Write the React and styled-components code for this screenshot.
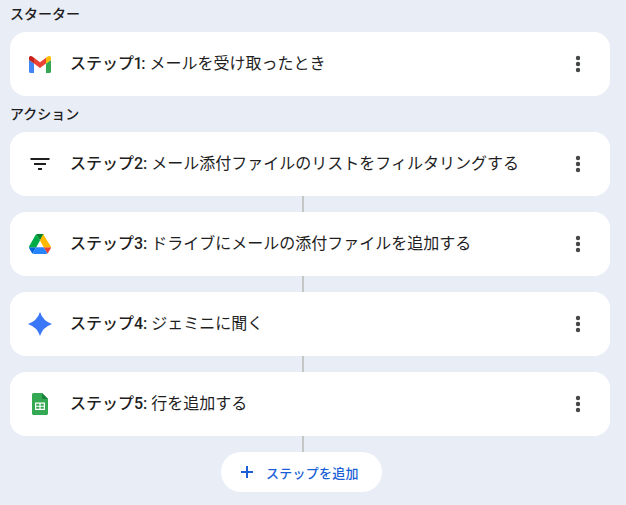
import { Fragment } from 'react';
import styled, { createGlobalStyle } from 'styled-components';

const GlobalStyle = createGlobalStyle`
  html, body {
    margin: 0;
    padding: 0;
    background: #e9edf6;
    font-family: Roboto, "Noto Sans CJK JP", sans-serif;
    color: #1f1f1f;
  }
`;

const Page = styled.div`
  width: 600px;
  height: 505px;
  overflow: hidden;
  padding: 0 16px 0 10px;
  display: flex;
  flex-direction: column;
`;

const SectionLabel = styled.div`
  height: ${(p) => (p.$tight ? '36px' : '32px')};
  line-height: ${(p) => (p.$tight ? '36px' : '29px')};
  font-size: 14px;
  font-weight: 500;
`;

const Card = styled.div`
  height: 64px;
  flex: none;
  box-sizing: border-box;
  background: #fff;
  border-radius: 16px;
  display: flex;
  align-items: center;
  padding: 0 20px 0 18px;
`;

const IconSlot = styled.div`
  width: 24px;
  height: 24px;
  margin-right: 18px;
  display: flex;
  align-items: center;
  justify-content: center;
`;

const Title = styled.div`
  flex: 1;
  font-size: 16px;
  line-height: 24px;
  white-space: nowrap;
`;

const StepNo = styled.span`
  font-weight: 500;
  font-variant-numeric: proportional-nums;
`;

const MenuButton = styled.div`
  width: 24px;
  height: 24px;
  display: flex;
  align-items: center;
  justify-content: center;
`;

const Connector = styled.div`
  width: 2px;
  height: 16px;
  flex: none;
  background: #c4c7c5;
  margin-left: 292px;
`;

const AddButton = styled.div`
  flex: none;
  width: 161px;
  height: 40px;
  box-sizing: border-box;
  margin-left: 211px;
  padding-left: 19px;
  background: #fff;
  border-radius: 20px;
  display: flex;
  align-items: center;
  gap: 12px;
  color: #1a5fd6;
  font-size: 13px;
  font-weight: 500;
  letter-spacing: 0.25px;
`;

const GmailIcon = () => (
  <svg width="24" height="24" viewBox="0 0 24 24">
    <path fill="#4285f4" d="M1 8v11.500C1 20.300 1.700 21 2.500 21H6V11.500z" />
    <path fill="#34a853" d="M18 11.500V21h3.500c.8 0 1.500-.7 1.500-1.500V8z" />
    <path fill="#ea4335" d="M6 11.500 12 16l6-4.500V5.800l-6 4.500-6-4.500z" />
    <path fill="#c5221f" d="M1 5.800V8l5 3.500V5.800L4.600 4.700C3.100 3.600 1 4 1 5.800z" />
    <path fill="#fbbc04" d="M18 5.800v5.700L23 8V5.800c0-1.800-2.100-2.200-3.600-1.100z" />
  </svg>
);

const FilterIcon = () => (
  <svg width="24" height="24" viewBox="0 0 24 24" fill="#1f1f1f">
    <path d="M2.500 6h19v2h-19zM6 11h12v2H6zM10 16h4v2h-4z" />
  </svg>
);

const DriveIcon = () => (
  <svg width="24" height="24" viewBox="0 0 24 24">
    <path fill="#0066da" d="M2.800 18.900 3.800 20.700c.2.400.5.700.9.900L8.300 15.300H1c0 .4.100.8.300 1.200z" />
    <path fill="#00ac47" d="M12 8.600 8.300 2.300c-.4.200-.7.500-.9.900L1.300 14.100c-.2.400-.3.800-.3 1.200h7.300z" />
    <path fill="#ea4335" d="M19.300 21.600c.4-.2.700-.5.900-.9l.4-.7 2.100-3.500c.2-.4.300-.8.300-1.200h-7.300l1.600 3z" />
    <path fill="#00832d" d="M12 8.600l3.700-6.300c-.4-.2-.8-.3-1.200-.3H9.500c-.4 0-.8.100-1.200.3z" />
    <path fill="#2684fc" d="M15.700 15.300H8.300l-3.600 6.300c.4.200.8.300 1.200.3h12.200c.4 0 .8-.1 1.200-.3z" />
    <path fill="#ffba00" d="M19.300 9 15.900 3.200c-.2-.4-.5-.7-.9-.9L12 8.600l3.700 6.700H23c0-.4-.1-.8-.3-1.200z" />
  </svg>
);

const GeminiIcon = () => (
  <svg width="24" height="24" viewBox="0 0 24 24">
    <path fill="#3b78f8" d="M12 0Q15 9 24 12 15 15 12 24 9 15 0 12 9 9 12 0z" />
  </svg>
);

const SheetsIcon = () => (
  <svg width="16" height="22" viewBox="0 0 16 22">
    <path fill="#34a853" d="M1.500 0H10l6 6v14.500c0 .8-.7 1.500-1.500 1.500h-13C.7 22 0 21.300 0 20.500v-19C0 .7.700 0 1.500 0z" />
    <path fill="#188038" d="M10 0l6 6h-4.500C10.700 6 10 5.300 10 4.500z" />
    <path fill="#fff" fillRule="evenodd" d="M3 9.500h10v7.500H3zm1.200 1.200v2h3.200v-2zm4.400 0v2h3.200v-2zm-4.400 3.100v2h3.200v-2zm4.400 0v2h3.200v-2z" />
  </svg>
);

const DotsIcon = () => (
  <svg width="24" height="24" viewBox="0 0 24 24" fill="#444746">
    <circle cx="12" cy="6" r="2.200" />
    <circle cx="12" cy="12" r="2.200" />
    <circle cx="12" cy="18" r="2.200" />
  </svg>
);

const PlusIcon = () => (
  <svg width="14" height="14" viewBox="0 0 14 14" fill="#1a5fd6">
    <path d="M6 1h2v5h5v2H8v5H6V8H1V6h5z" />
  </svg>
);

const actions = [
  { no: 'ステップ2:', text: 'メール添付ファイルのリストをフィルタリングする', icon: <FilterIcon /> },
  { no: 'ステップ3:', text: 'ドライブにメールの添付ファイルを追加する', icon: <DriveIcon /> },
  { no: 'ステップ4:', text: 'ジェミニに聞く', icon: <GeminiIcon /> },
  { no: 'ステップ5:', text: '行を追加する', icon: <SheetsIcon /> },
];

function Step({ no, text, icon }) {
  return (
    <Card>
      <IconSlot>{icon}</IconSlot>
      <Title>
        <StepNo>{no}</StepNo> {text}
      </Title>
      <MenuButton>
        <DotsIcon />
      </MenuButton>
    </Card>
  );
}

export default function App() {
  return (
    <Page>
      <GlobalStyle />
      <SectionLabel>スターター</SectionLabel>
      <Step no="ステップ1:" text="メールを受け取ったとき" icon={<GmailIcon />} />
      <SectionLabel $tight>アクション</SectionLabel>
      {actions.map((step) => (
        <Fragment key={step.no}>
          <Step {...step} />
          <Connector />
        </Fragment>
      ))}
      <AddButton>
        <PlusIcon />
        ステップを追加
      </AddButton>
    </Page>
  );
}
